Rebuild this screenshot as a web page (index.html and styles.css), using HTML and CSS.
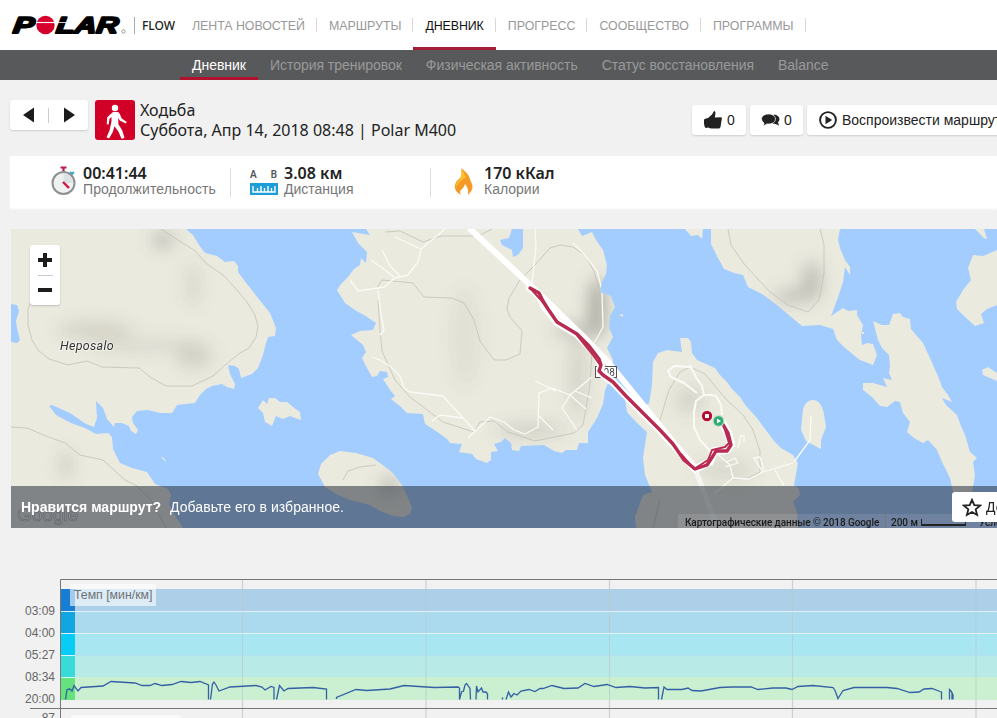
FILE: index.html
```html
<!DOCTYPE html>
<html lang="ru">
<head>
    <meta charset="utf-8">
    <title>Polar Flow</title>
    <link rel="stylesheet" href="styles.css">
</head>
<body>
    <header class="header">
        <svg class="logo" width="115" height="24" viewBox="0 0 115 24">
            <g class="logo-text">
                <text x="4" y="20" textLength="21" lengthAdjust="spacingAndGlyphs" transform="skewX(-7)">P</text>
                <text x="47" y="20" textLength="62" lengthAdjust="spacingAndGlyphs" transform="skewX(-7)">LAR</text>
            </g>
            <circle cx="34.500" cy="12" r="9.200" fill="#d5002b"/>
            <path d="M25 9.500h19" stroke="#fff" stroke-width="1.200"/>
            <path d="M46 9.500h20" stroke="#fff" stroke-width=".8"/>
            <circle cx="112.500" cy="18.500" r="1.700" fill="none" stroke="#777" stroke-width=".7"/>
        </svg>
        <span class="flow">FLOW</span>
        <nav class="nav">
            <a class="first">ЛЕНТА НОВОСТЕЙ</a>
            <a>МАРШРУТЫ</a>
            <a class="active">ДНЕВНИК</a>
            <a>ПРОГРЕСС</a>
            <a>СООБЩЕСТВО</a>
            <a>ПРОГРАММЫ</a>
        </nav>
    </header>
    <nav class="subnav">
        <a class="active">Дневник</a>
        <a>История тренировок</a>
        <a>Физическая активность</a>
        <a>Статус восстановления</a>
        <a>Balance</a>
    </nav>

    <main>
        <section class="title-row">
            <div class="box arrows">
                <svg width="78" height="30" viewBox="0 0 78 30">
                    <path d="M24 7.500v15L13 15zM54 7.500v15L65 15z" fill="#1c1c1c"/>
                    <path d="M38.500 8v15" stroke="#ccc"/>
                </svg>
            </div>
            <svg class="sport" width="40" height="40" viewBox="0 0 40 40">
                <rect width="40" height="40" rx="3" fill="#d10027"/>
                <circle cx="20" cy="8" r="3.200" fill="#fff"/>
                <path d="M18 12h4.500q1.500 0 2.300 2l2 4.500 5 3.500-1 1.500-6-3-1.500-2.500v6l4 6.500 2.200 7.500-3 .7-3-7-4-5.500-1.800 6-3.700 6.300-2.500-1.200 3-6.800 2-9v-4.500l-2 1.800-.8 5.700-2-.3.500-7z" fill="#fff"/>
            </svg>
            <h1>Ходьба<br>Суббота, Апр 14, 2018 08:48 | Polar M400</h1>
            <div class="actions">
                <div class="box action">
                    <svg width="18" height="18" viewBox="0 0 18 18">
                        <path d="M0 8.500q2-1.500 4-1.500l4-3.500L10 0q1.500 0 1.500 2L10.800 6.500 17 6.200q1.200.3.800 1.800L16.500 16q-.5 1.500-2 1.600L7 17.500l-3-1q-2 .8-3 0-1.500-4-1-8z" fill="#222"/>
                    </svg>
                    <span>0</span>
                </div>
                <div class="box action comments">
                    <svg width="19" height="14" viewBox="0 0 19 14">
                        <path d="M13 1.500q5 .5 5.500 4.500 0 2-1.500 3.300l1 3.200-3.500-1.600-3-.5 2-3.400z" fill="#222"/>
                        <path d="M7.500 1C12 1 14.500 3.500 14.500 6S12 11 7.500 11L6 10.900 2.500 13l.5-3Q.5 8.500.5 6C.5 3.500 3 1 7.500 1z" fill="#222" stroke="#fff" stroke-width=".7"/>
                    </svg>
                    <span>0</span>
                </div>
                <div class="box action play">
                    <svg width="18" height="18" viewBox="0 0 18 18">
                        <circle cx="9" cy="9" r="7.900" fill="none" stroke="#222" stroke-width="1.900"/>
                        <path d="M6.500 4.700v8.600L13.200 9z" fill="#222"/>
                    </svg>
                    <span>Воспроизвести маршрут</span>
                </div>
            </div>
        </section>

        <section class="stats">
            <div class="stat">
                <svg width="28" height="30" viewBox="0 0 28 30">
                    <path d="M9.500 1.500h6M12.500 1.500v4" stroke="#b51f4b" stroke-width="2.200"/>
                    <path d="M19 6l2 2 2-2" stroke="#35a8c8" stroke-width="2" fill="none"/>
                    <circle cx="12.500" cy="17" r="11" fill="#eff1f1" stroke="#8c9092" stroke-width="2"/>
                    <path d="M12.500 7v10h9.500A10 10 0 0 0 12.500 7z" fill="#dde3e4"/>
                    <path d="M12 16l6 6" stroke="#d01545" stroke-width="2.400"/>
                </svg>
                <div><b>00:41:44</b><span class="name duration">Продолжительность</span></div>
            </div>
            <div class="stat distance">
                <svg width="28" height="30" viewBox="0 0 28 30">
                    <text x="0" y="12" class="ab">A</text>
                    <text x="20.500" y="12" class="ab">B</text>
                    <path d="M0 17h28v12H0z" fill="#1b9dd9"/>
                    <path d="M3 20v6h22v-6M7.500 22v4M11 20v6M14.500 22v4M18 20v6M21.500 22v4" stroke="#fff" stroke-width="1.400" fill="none"/>
                </svg>
                <div><b>3.08 км</b><span class="name">Дистанция</span></div>
            </div>
            <div class="stat calories">
                <svg width="20" height="30" viewBox="0 -2 20 30">
                    <path d="M7 0q8 6 9 11l1 3q2 2 1.500 5.500T14 27q1-6-3-11-1 4-3.500 5.500T7 27Q0 23 .8 18T6 10 7 0z" fill="#f59a27"/>
                    <path d="M7 1q4 4 4.500 9-6 2-10 10 0-5 4.500-9 2-5 1-10z" fill="#fbc02c"/>
                </svg>
                <div><b>170 кКал</b><span class="name">Калории</span></div>
            </div>
        </section>

        <section class="map">
            <svg class="map-canvas" width="986" height="299" viewBox="11 229 986 299">
                <defs>
                    <clipPath id="land-clip">
                        <use href="#land"/>
                    </clipPath>
                    <filter id="soft" x="-100%" y="-100%" width="300%" height="300%"><feGaussianBlur stdDeviation="8"/></filter>
                </defs>
                <rect x="11" y="229" width="986" height="299" fill="#a3ccff"/>
                <path id="land" fill="#ebeadf" d="
                    M11 229H186L193 235 199 245 205 253 217 256 225 262 234 261 238 266 238 272 247 284 258 298 270 313 276 328 275 336 268 337 265 347 263 355 258 368 252 374 241 378 239 369 235 366 228 365 230 374 235 384 234 389 227 387 222 384 212 386 206 389 200 395 195 403 177 405 172 413 160 413 148 410 137 411 132 417 133 423 138 430 136 434 131 431 129 426 122 423 115 423 114 427 107 419 103 408 96 401 97 418 94 427 86 424 70 413 52 405 49 406 56 415 71 423 85 428 96 434 108 433 112 437 113 449 120 463 132 468 147 472 155 484 168 489 171 495 169 505 176 517 183 528H11V342L17 343 20 340 17 328 16 321 19 311 17 305 11 304z
                    M366 229 370 235 352 232 358 243 367 252 366 263 361 258 360 265 354 269 348 277 341 284 337 290 345 303 355 310 367 317 376 323 373 330 360 331 351 335 363 345 366 352 362 358 367 368 372 377 377 376 380 371 387 372 388 377 383 379 390 390 395 396 391 399 401 407 407 413 423 414 425 424 436 431 447 439 450 443 462 444 459 452 472 454 476 459 487 463 491 460 491 452 498 451 494 444 501 442 505 438 511 443 512 450 519 451 521 446 544 445 554 451 562 453 566 450 577 450 579 443 588 443 588 432 597 418 603 404 605 390 611 376 613 360 607 348 613 337 609 328 610 316 615 307 611 296 600 292 602 282 606 274 607 265 603 250 596 240 592 232 582 236 578 229H523L523 248 518 255 513 257 512 250 502 245 500 240 509 238 512 229z
                    M318 474 321 464 330 455 340 451 356 453 373 458 384 466 393 473 402 485 408 498 412 508 410 514 404 517 393 516 380 511 370 505 350 500 336 494 325 487z
                    M258 408 263 400 267 404 269 398 275 398 280 402 287 402 293 407 300 412 301 420 295 418 290 416 283 419 276 416 272 426 265 422 263 413z
                    M161 456 165 459 166 462 162 458z
                    M680 338 688 338 691 342 692 353 697 360 715 368 720 375 727 382 732 389 740 397 746 406 757 418 765 429 775 442 781 448 793 455 798 463 794 485 799 489 800 495 793 502 797 512 798 528H636L635 517 643 495 652 492 645 475 643 458 647 432 637 423 627 412 625 400 639 405 649 404 652 385 653 362 658 353 667 350 682 352z
                    M685 229 691 236 698 235 702 239 703 229z
                    M711 229 711 244 718 258 724 269 734 273 743 275 748 287 762 294 777 305 790 316 802 326 820 325 833 329 837 340 845 348 860 360 873 365 877 355 873 344 867 343 862 345 861 336 863 325 857 315 857 310 848 311 843 308 831 316 837 300 843 282 845 267 850 275 850 267 845 260 840 248 838 240 840 229z
                    M873 321 882 325 889 325 893 314 900 313 903 317 910 319 911 329 923 343 929 356 933 365 938 376 942 387 948 395 952 402 942 398 946 405 957 415 961 426 965 435 970 452 977 458 973 462 975 475 972 492H953L950 478 942 462 937 450 928 440 923 443 914 438 907 432 910 422 903 413 900 402 895 401 887 407 880 406 872 397 863 390 863 383 873 383 887 387 883 378 892 380 889 373 890 366 889 355 882 348 878 340z
                    M997 250 983 256 973 255 968 268 971 280 963 290 956 302 957 309 965 317 975 326 984 323 981 314 987 309 997 305z
                    M975 229 984 238 987 239 984 229z
                    M997 373 988 367 982 370 983 375 997 381z
                    M813 400Q821 400 824 414L826 427 821 440 821 449 815 446 806 441 801 430 803 409Q806 400 813 400z
                    M861 332h3v2h-3zM619 315l4-1v3z"/>
                <g clip-path="url(#land-clip)">
                    <g fill="#68685f" filter="url(#soft)">
                        <ellipse cx="163" cy="240" rx="11" ry="9" opacity=".3"/>
                        <ellipse cx="95" cy="330" rx="38" ry="9" opacity=".18"/>
                        <ellipse cx="140" cy="345" rx="50" ry="8" opacity=".12"/>
                        <ellipse cx="193" cy="285" rx="7" ry="22" opacity=".14"/>
                        <ellipse cx="194" cy="355" rx="18" ry="14" opacity=".18"/>
                        <ellipse cx="66" cy="465" rx="5" ry="14" opacity=".25"/>
                        <ellipse cx="597" cy="308" rx="9" ry="30" opacity=".46"/>
                        <ellipse cx="575" cy="330" rx="22" ry="6" opacity=".32"/>
                        <ellipse cx="578" cy="375" rx="9" ry="45" opacity=".16"/>
                        <ellipse cx="465" cy="337" rx="14" ry="50" opacity=".08"/>
                        <ellipse cx="530" cy="430" rx="35" ry="7" opacity=".2"/>
                        <ellipse cx="812" cy="280" rx="10" ry="18" opacity=".3"/>
                        <ellipse cx="794" cy="296" rx="20" ry="7" opacity=".3"/>
                        <ellipse cx="390" cy="485" rx="10" ry="9" opacity=".32"/>
                        <ellipse cx="690" cy="400" rx="15" ry="14" opacity=".15"/>
                        <ellipse cx="725" cy="470" rx="30" ry="12" opacity=".12"/>
                    </g>
                    <g class="trail">
                        <path d="M161 229 181 242 194 250 207 264 223 275 236 289 247 302 255 315 258 327 256 337 249 348 240 353 225 365 213 376 192 386 166 386 150 377 139 368 102 367 87 361 68 365 49 359 38 350 32 340 28 325 28 309 34 294"/>
                        <path d="M11 427 27 428 46 436 65 443 80 455 103 460 125 480 137 486 151 500 166 528"/>
                        <path d="M377 288 382 280 413 283 424 297 452 298 464 303 474 320 480 341 494 360 506 360 520 354 522 331 510 317 507 309 509 298 520 280 535 265 550 248 560 245 573 247 585 255 594 271 600 292 601 325 592 352 590 385 583 425 574 433 535 441 508 432 494 421 480 422 474 432 443 422 410 397 395 380 382 351 380 330 378 300"/>
                        <path d="M385 232 400 231 423 242 441 236 478 236 492 229M728 229 731 245 745 265 757 278 770 292 788 305 808 312 819 300 824 273 824 245 820 229"/>
                        <path d="M343 480 348 471 360 467 376 465M660 420 669 390 680 372 690 367 705 374 725 398 743 415 753 430 760 451 760 472 748 478 733 479M660 500 653 528"/>
                    </g>
                    <g class="road">
                        <path d="M395 237 410 244 421 249 445 229M421 249 418 262 408 275 395 278 384 287 358 291 350 280M378 290 381 315 384 330 380 335M382 250 390 266 401 277M371 260 385 270 394 277"/>
                        <path d="M372 357 380 360 390 366 400 376 404 388 410 392 443 396 453 407 463 418 440 415 432 421M463 418 475 431 482 425 490 417 504 422 514 430 525 434 538 427 539 393 552 388 570 395 592 377M570 395 562 408 577 430M570 395 586 409M575 391 592 398M538 415 553 430M475 431 468 438M535 381 556 391"/>
                        <path d="M535 229 536 246 532 284M573 243 584 254 597 271 602 290 603 327 592 347"/>
                        <path d="M713 450 730 465 733 478 749 479 763 472 793 463M763 472 754 458 760 457 764 470M775 470 784 486M733 478 715 493M725 467 738 463 735 458 727 462M738 448 741 435 744 436 744 442"/>
                    </g>
                    <g class="road wide">
                        <path d="M690 365 697 379 702 386 704 395 710 395 716 396 721 405 722 415M697 393 684 383 671 377 668 371 674 366 690 367M704 395 696 401 694 412 694 427 700 440 710 451"/>
                    </g>
                </g>
                <path class="road" d="M811 416 810 440 794 462"/>
                <path d="M469 228 528 283 582 335 609 363 695 469" fill="none" stroke="#fff" stroke-width="6"/>
                <path d="M695 469 718 528" fill="none" stroke="#f4f4f0" stroke-width="5"/>
                <rect x="595.500" y="366.500" width="21" height="11" fill="#fff" stroke="#555"/>
                <text x="598" y="376" class="road-number">408</text>
                <path class="route-halo" d="M530 288 539 295 545 307 557 322 577 334 597 355 601 365 600 372 613 382 640 410 660 430 683 455 695 469 710 462 714 451 727 450 731 444 728 433 721 421"/>
                <path class="route" d="M530 288 539 293 543 301 548 309 557 322 577 334 589 346 599 359 601 365 599 371 603 375 613 382 626 396 640 410 660 430 673 444 684 460 695 469 707 465 713 456 716 451 727 451 731 445 728 433 721 421"/>
                <path class="route thin" d="M530 288 540 299 548 309M576 334 593 355 600 365M724 427 729 443 725 447 712 450 708 460 694 469 681 454"/>
                <circle cx="707" cy="416" r="6" fill="#fff" opacity=".6"/>
                <circle cx="707" cy="416" r="5.200" fill="#b20e36"/>
                <rect x="705" y="414" width="4" height="4" rx=".6" fill="#fff"/>
                <circle cx="718.500" cy="421" r="6" fill="#c5ddd1"/>
                <circle cx="718.500" cy="421" r="4.800" fill="#2aae70"/>
                <path d="M717 418.500v5l4-2.500z" fill="#fff"/>
                <text x="60" y="349.500" class="place">Heposalo</text>
                <text x="17" y="521" class="google">Google</text>
            </svg>
            <div class="zoom">
                <svg width="30" height="60" viewBox="0 0 30 60">
                    <path d="M8 15h14M15 8v14M8 45h14" stroke="#1d1d1d" stroke-width="4"/>
                    <path d="M8 30.500h15" stroke="#c3cbd0"/>
                </svg>
            </div>
            <div class="favorite">
                <b>Нравится маршрут?</b><span>Добавьте его в избранное.</span>
            </div>
            <div class="attribution">
                <span class="data">Картографические данные © 2018 Google</span>
                <span class="scale">200 м<i></i></span>
                <span class="terms">Условия</span>
            </div>
            <div class="add">
                <svg width="20" height="19" viewBox="0 0 20 19">
                    <path d="M10 1.800 12.300 7.200 18.200 7.600 13.700 11.400 15.100 17 10 14 4.900 17 6.300 11.400 1.800 7.600 7.700 7.200z" fill="none" stroke="#222" stroke-width="1.800"/>
                </svg>
                <span>Добавить</span>
            </div>
        </section>

        <section class="chart">
            <div class="axis">
                <span>03:09</span>
                <span>04:00</span>
                <span>05:27</span>
                <span>08:34</span>
                <span>20:00</span>
                <span class="next">87</span>
            </div>
            <svg class="plot" width="967" height="140" viewBox="30 578 967 140">
                <path class="grid" d="M242.500 580v138M426 580v138M609.500 580v138M792.500 580v138M976 580v138"/>
                <g>
                    <rect x="61" y="589" width="936" height="22" fill="#adcfe8"/>
                    <rect x="61" y="611" width="936" height="22" fill="#abdaee"/>
                    <rect x="61" y="633" width="936" height="22" fill="#a8e7f2"/>
                    <rect x="61" y="655" width="936" height="22" fill="#b8ebe8"/>
                    <rect x="61" y="677" width="936" height="23" fill="#caefd1"/>
                    <rect x="61" y="589" width="14" height="22" fill="#177ed3"/>
                    <rect x="61" y="611" width="14" height="22" fill="#12a6e0"/>
                    <rect x="61" y="633" width="14" height="22" fill="#06ccf6"/>
                    <rect x="61" y="655" width="14" height="22" fill="#38dbd8"/>
                    <rect x="61" y="677" width="14" height="23" fill="#65e27e"/>
                </g>
                <path class="grid inner" d="M242.500 589v111M426 589v111M609.500 589v111M792.500 589v111M976 589v111"/>
                <path d="M61 611.500h936M61 633.500h936" stroke="#e0f2fa"/>
                <path d="M61 655.500h14M61 677.500h14" stroke="#d8f6f5"/>
                <path d="M75 655.500h922" stroke="#b5e1ee"/>
                <path d="M60.500 718V579.500H997M30 708.500H997" fill="none" stroke="#777"/>
                <path d="M71 715h110v3H71z" fill="#fff" opacity=".6"/>
                <rect x="70" y="584" width="86" height="22" fill="#fff" opacity=".6"/>
                <path class="pace" d="M65.500 699.500 67 689.500 70 689 72 691 74 685.500 78 691 81 687.500 103 686 111 681.500 135 683 142 685.500 150 685.500 155 683.500 162 685.500 172 684.500 181 681.500 191 682.500 200 681.500 208.500 685V699.500M210.500 699.500 212.500 684 214 682 216 685 219 691 230 687 256 685.500 262 687 265 690 271 686.500 274 687.500V699.500M276.500 699.500 279.500 685.500 284 691 288 688.500 313 687.500 326.500 689V699.500"/>
                <path class="pace" d="M336.500 699V697.500L356 689.500 367 690.500 390 689 404 685.500 434 687.500 458 687 459.500 688V699.500L461.500 692 463.500 691 465 685 466.500 683.500 470 688.500 470.500 699.500M476 699.500 476.500 686 478 692 481.500 688 483 692 486 692 487.500 694V699.500M502 699.500 503 697.500M506 699.500 508.500 692 511 697 514 693.500 517 695 521 691 529 689.500 535 691.500 540 688.500 543 688.500 552 685.500 564 688.500 578 688 585 683.500 594 686.500 607 684.500 616 687.500 630 686.500 645 688 658.500 687.500V699.500"/>
                <path class="pace" d="M661.500 699.500 664 687 667 689.500 682 689.500 688 688 692 690.500 701 691 720 687.500 732 687 751 687 758 689.500 773 688 786 688 792 689.500 798 686.500 813 685.500 833 687.500 835 690.500 838 698.500 843 690.500 854 687.500 887 687.500 897 688.500 910 692.500 919 692 924 689 932 688.500 940 691.500 941.500 692V699.500M949.500 699.500 949.500 689.500 951 691 953 695V699.500M952 692V699.500"/>
                <text x="74" y="599" class="chart-title">Темп [мин/км]</text>
            </svg>
        </section>
    </main>
</body>
</html>
```
FILE: styles.css
```css
body {
    margin: 0;
    width: 997px;
    height: 718px;
    overflow: hidden;
    background-color: #f1f1f1;
    font-family: "Liberation Sans", Arial, sans-serif;
    color: #222;
}
svg {
    display: block;
    flex-shrink: 0;
}
.header {
    display: flex;
    align-items: center;
    height: 50px;
    padding-left: 11px;
    background-color: #fff;
}
.logo {
    margin-right: 8px;
}
.logo-text {
    font: italic bold 23px "Liberation Sans", Arial, sans-serif;
    stroke: #000;
    stroke-width: 2;
    stroke-linejoin: round;
}
.flow {
    box-sizing: border-box;
    width: 46px;
    border-left: 1px solid #aaa;
    padding-left: 7px;
    font: 500 12px/17px "Noto Sans", sans-serif;
    white-space: nowrap;
}
.nav {
    display: flex;
    height: 50px;
}
.nav a {
    position: relative;
    display: flex;
    align-items: center;
    padding: 1px 12px 0;
    font-size: 12.4px;
    color: #999;
    white-space: nowrap;
}
.nav .first {
    letter-spacing: -0.05px;
}
.nav a::after {
    content: "";
    position: absolute;
    right: 0;
    top: 18px;
    height: 14px;
    border-right: 1px solid #d8d8d8;
}
.nav .active {
    letter-spacing: -0.1px;
    color: #111;
    box-shadow: inset 0 -3px #a31c38;
}
.subnav {
    display: flex;
    height: 30px;
    padding-left: 180px;
    background-color: #58595b;
}
.subnav a {
    padding: 0 12px;
    font-size: 14px;
    letter-spacing: -0.03px;
    line-height: 30px;
    color: #98999a;
    white-space: nowrap;
}
.subnav .active {
    color: #fff;
    box-shadow: inset 0 -3px #b0122f;
}
main {
    padding-left: 10px;
}
.title-row {
    display: flex;
    height: 56px;
    padding-top: 20px;
}
.box {
    height: 30px;
    background-color: #fff;
    border-radius: 3px;
    box-shadow: 0 1px 2px rgba(0, 0, 0, 0.15);
}
.sport {
    margin: 0 5px 0 7px;
}
h1 {
    margin: 0;
    font: 16px/20px "Noto Sans", sans-serif;
    white-space: nowrap;
}
.actions {
    display: flex;
    gap: 4px;
    margin: 5px 0 0 auto;
    width: 305px;
}
.action {
    display: flex;
    flex-shrink: 0;
    box-sizing: border-box;
    align-items: center;
    gap: 5px;
    width: 54px;
    padding-left: 12px;
    font-size: 14px;
    white-space: nowrap;
}
.action.comments {
    width: 53px;
    padding-left: 11px;
    gap: 4px;
}
.action.play {
    width: 210px;
}
.stats {
    display: flex;
    height: 52px;
    background-color: #fff;
    box-shadow: 0 1px 2px #fff;
}
.stat {
    display: flex;
    position: relative;
    box-sizing: border-box;
    width: 220px;
    padding: 9px 0 0 41px;
    gap: 4px;
}
.stat div {
    display: flex;
    flex-direction: column;
}
.stat svg {
    margin-top: 1px;
}
.stat b {
    font: 600 16px/16px "Noto Sans", sans-serif;
}
.stat .name {
    font-size: 14px;
    line-height: 16px;
    color: #777;
}
.stat .duration {
    letter-spacing: 0.08px;
}
.distance, .calories {
    width: 200px;
    padding-left: 20px;
    gap: 6px;
}
.calories {
    padding-left: 24px;
    gap: 10px;
}
.distance::before, .calories::before {
    content: "";
    position: absolute;
    left: 0;
    top: 12px;
    height: 29px;
    border-left: 1px solid #ddd;
}
.ab {
    font: 600 10px "Noto Sans", sans-serif;
    fill: #555;
}
.map {
    position: relative;
    width: 986px;
    height: 299px;
    margin: 21px 0 0 1px;
    overflow: hidden;
}
.trail {
    fill: none;
    stroke: #c3c2b9;
    stroke-width: 0.8;
}
.road {
    fill: none;
    stroke: #fbfbf6;
    stroke-width: 1.3;
    stroke-linejoin: round;
}
.wide {
    stroke-width: 2;
}
.route, .route-halo {
    fill: none;
    stroke: #b92a51;
    stroke-width: 3.4;
    stroke-linejoin: round;
    stroke-linecap: round;
}
.route-halo {
    stroke: #fff;
    stroke-width: 8;
}
.route.thin {
    stroke-width: 2;
}
.road-number {
    font: 10px Roboto, sans-serif;
    fill: #444;
}
.place {
    font: italic 12.5px Roboto, sans-serif;
    letter-spacing: 0.3px;
    fill: #333;
    stroke: #fff;
    stroke-width: 2;
    stroke-opacity: 0.5;
    paint-order: stroke;
}
.google {
    font: 19px "Liberation Sans", Arial, sans-serif;
    fill: #fff;
    fill-opacity: 0.55;
    stroke: #999;
    stroke-width: 0.5;
}
.zoom {
    position: absolute;
    left: 19px;
    top: 16px;
    background-color: #fff;
    border-radius: 3px;
    box-shadow: 0 1px 2px rgba(0, 0, 0, 0.2);
}
.favorite {
    position: absolute;
    left: 0;
    right: 0;
    bottom: 0;
    height: 42px;
    padding-left: 10px;
    background-color: rgba(34, 42, 54, 0.53);
    color: #fff;
    font-size: 14px;
    line-height: 42px;
}
.favorite b {
    margin-right: 9px;
}
.favorite span {
    letter-spacing: 0.05px;
}
.attribution {
    position: absolute;
    left: 667px;
    bottom: 0;
    display: flex;
    height: 14px;
    background-color: rgba(255, 255, 255, 0.1);
    font: 500 10px/17px Roboto, sans-serif;
    color: #1c1c1c;
    white-space: nowrap;
}
.attribution .data {
    box-sizing: border-box;
    width: 207px;
    padding-left: 7px;
    letter-spacing: -0.08px;
}
.attribution .scale {
    box-sizing: border-box;
    display: flex;
    width: 89px;
    padding-left: 5px;
    border-left: 1px solid #777;
}
.scale i {
    width: 43px;
    height: 5px;
    margin: 5px 0 0 3px;
    border: solid #222;
    border-width: 0 1px 2px;
}
.attribution .terms {
    padding-left: 5px;
}
.add {
    position: absolute;
    left: 941px;
    top: 263px;
    display: flex;
    align-items: center;
    gap: 4px;
    width: 110px;
    height: 30px;
    padding-left: 10px;
    background-color: #fff;
    border-radius: 3px;
    font-size: 14px;
}
.chart {
    display: flex;
    margin-top: 50px;
    height: 140px;
}
.axis {
    display: flex;
    flex-direction: column;
    width: 45px;
    padding-top: 22px;
    font-size: 12px;
    line-height: 22px;
    color: #666;
    text-align: right;
}
.axis .next {
    margin-top: -3px;
}
.plot {
    margin-left: -25px;
}
.grid {
    stroke: #cdd0d2;
    stroke-width: 1.2;
}
.inner {
    stroke: #b9c9ce;
    stroke-width: 1;
    opacity: 0.7;
}
.pace {
    fill: none;
    stroke: #3560a5;
    stroke-width: 1.3;
}
.chart-title {
    font: 12.3px "Liberation Sans", Arial, sans-serif;
    fill: #6d7276;
}
```
